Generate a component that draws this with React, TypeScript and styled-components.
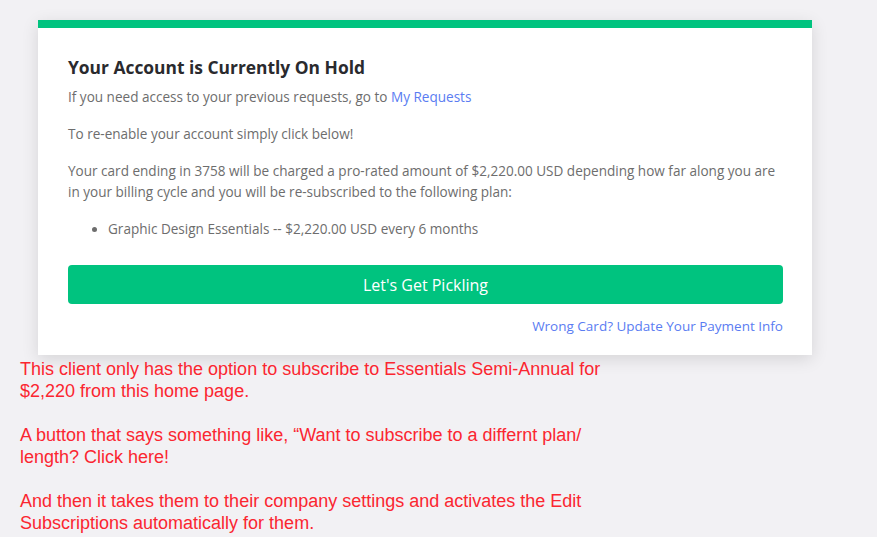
import React from 'react'
import styled, { createGlobalStyle } from 'styled-components'

const GlobalStyle = createGlobalStyle`
  html, body {
    margin: 0;
    padding: 0;
    background: #f2f1f4;
  }
`

const Page = styled.div`
  padding: 20px 20px 0 20px;
`

const Card = styled.div`
  width: 774px;
  margin-left: 18px;
  box-sizing: border-box;
  background: #ffffff;
  border-top: 8px solid #00c37f;
  padding: 27px 29px 20px 30px;
  font-family: "Open Sans", "Noto Sans", sans-serif;
  box-shadow: 0 4px 16px rgba(0, 0, 0, 0.12);
`

const Title = styled.h2`
  margin: 0 0 8px 0;
  font-size: 17.4px;
  line-height: 24px;
  font-weight: 700;
  color: #2a2a2e;
`

const Text = styled.p`
  margin: 0 0 16px 0;
  font-size: 13.55px;
  line-height: 21px;
  color: #6d6d6d;
`

const Link = styled.a`
  color: #5a7cf2;
  text-decoration: none;
`

const PlanList = styled.ul`
  margin: 0 0 25px 0;
  padding-left: 40px;
  font-size: 13.55px;
  line-height: 21px;
  color: #6d6d6d;
`

const PrimaryButton = styled.button`
  display: block;
  width: 100%;
  height: 39px;
  border: none;
  border-radius: 4px;
  background: #00c37f;
  color: #ffffff;
  font-family: "Open Sans", "Noto Sans", sans-serif;
  font-size: 16px;
  cursor: pointer;
`

const Footer = styled.div`
  display: flex;
  justify-content: flex-end;
  margin-top: 13px;
  font-size: 13.5px;
  line-height: 18px;
`

const Notes = styled.div`
  margin-top: 3px;
  font-family: "Liberation Sans", Arial, sans-serif;
  font-size: 18px;
  line-height: 22px;
  color: #fb2630;
`

const Note = styled.p`
  margin: 0 0 22px 0;
  white-space: nowrap;
`

export default function App() {
  return (
    <Page>
      <GlobalStyle />
      <Card>
        <Title>Your Account is Currently On Hold</Title>
        <Text>
          If you need access to your previous requests, go to <Link href="#">My Requests</Link>
        </Text>
        <Text>To re-enable your account simply click below!</Text>
        <Text>
          Your card ending in 3758 will be charged a pro-rated amount of $2,220.00 USD depending how far along you are
          in your billing cycle and you will be re-subscribed to the following plan:
        </Text>
        <PlanList>
          <li>Graphic Design Essentials -- $2,220.00 USD every 6 months</li>
        </PlanList>
        <PrimaryButton>Let's Get Pickling</PrimaryButton>
        <Footer>
          <Link href="#">Wrong Card? Update Your Payment Info</Link>
        </Footer>
      </Card>
      <Notes>
        <Note>
          This client only has the option to subscribe to Essentials Semi-Annual for
          <br />
          $2,220 from this home page.
        </Note>
        <Note>
          A button that says something like, “Want to subscribe to a differnt plan/
          <br />
          length? Click here!
        </Note>
        <Note>
          And then it takes them to their company settings and activates the Edit
          <br />
          Subscriptions automatically for them.
        </Note>
      </Notes>
    </Page>
  )
}
